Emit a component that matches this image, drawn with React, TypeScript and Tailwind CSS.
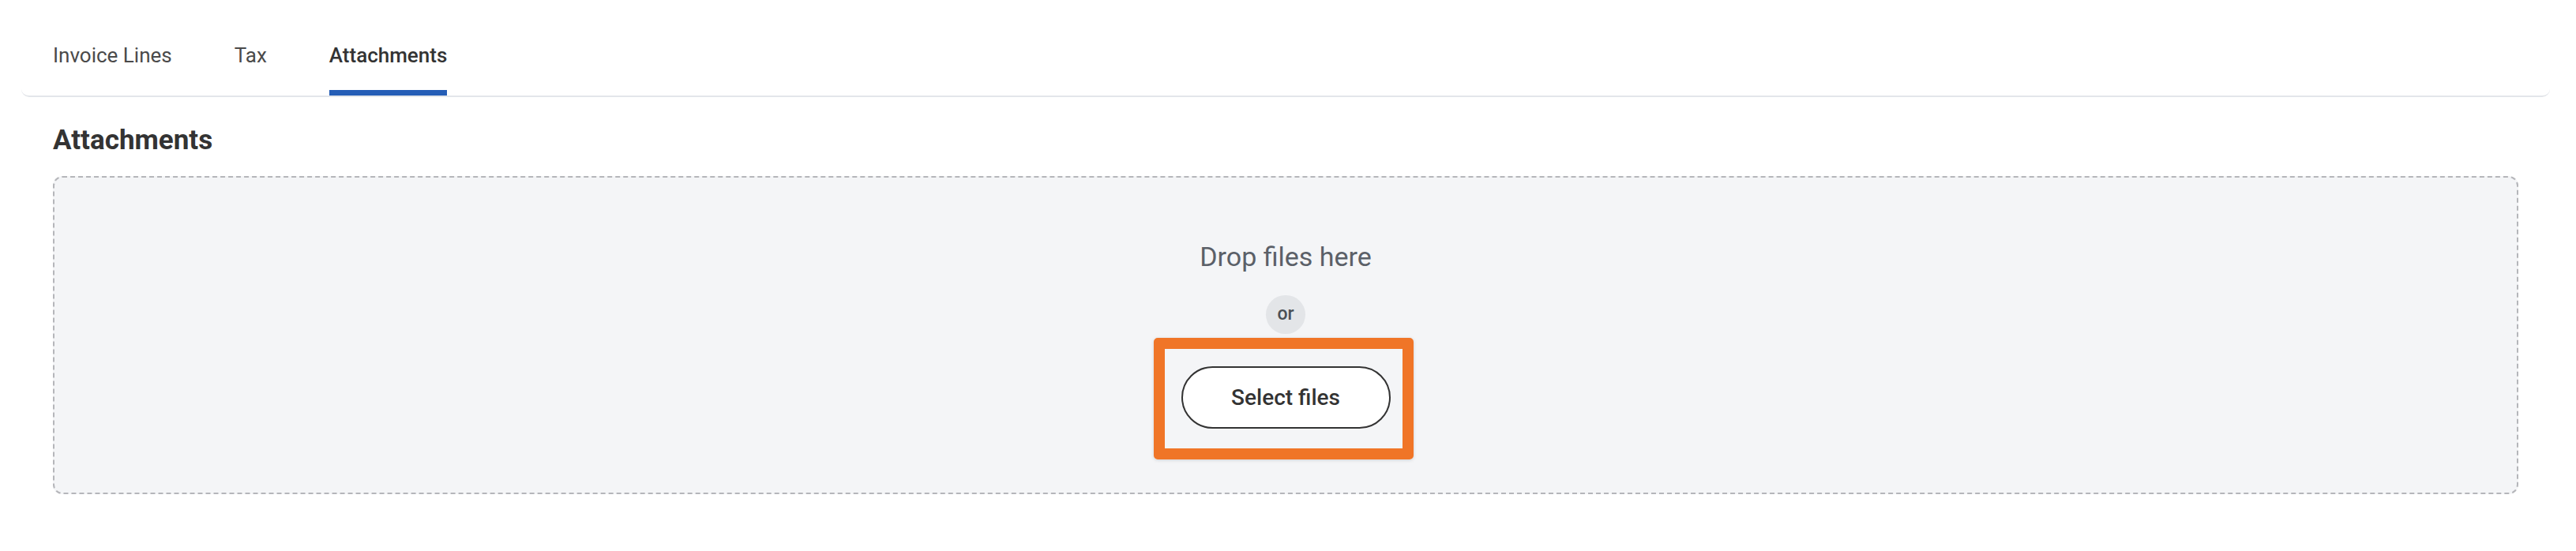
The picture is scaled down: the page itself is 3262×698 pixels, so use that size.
import React from 'react';

const tabs = ['Invoice Lines', 'Tax', 'Attachments'];

const App: React.FC = () => {
  const active = 'Attachments';

  return (
    <div className="min-h-screen bg-white pl-[27px] pr-[33px] font-['Roboto',sans-serif]">
      {/* tab bar */}
      <div className="flex border-b-2 border-[#e3e6ea] rounded-b-[10px] px-[40px]">
        {tabs.map((tab, i) => (
          <button
            key={tab}
            className={`pt-[52px] pb-[26px] border-b-[7px] text-[26px] leading-[36px] ${
              i > 0 ? 'ml-[79px]' : ''
            } ${
              tab === active
                ? 'border-[#255eb6] text-[#333333] font-medium'
                : 'border-transparent text-[#4a4a4a] font-normal'
            }`}
          >
            {tab}
          </button>
        ))}
      </div>

      <div className="px-[40px]">
        <h2 className="mt-[33px] text-[35px] leading-[44px] font-bold text-[#333333]">
          Attachments
        </h2>

        {/* drop zone */}
        <div className="mt-[23px] flex flex-col items-center rounded-[12px] border-2 border-dashed border-[#b5b6ba] bg-[#f4f5f7] pt-[80px] pb-[81px]">
          <p className="text-[34px] leading-[40px] text-[#5b6068]">Drop files here</p>
          <div className="mt-[29px] flex h-[49px] w-[50px] items-center justify-center rounded-full bg-[#e3e5e8] text-[23px] font-medium text-[#4b5056]">
            or
          </div>
          <div className="relative mt-[41px]">
            <button className="flex h-[79px] w-[265px] items-center justify-center rounded-full border-2 border-[#333333] bg-white text-[28px] font-medium text-[#333333]">
              Select files
            </button>
            {/* annotation highlight */}
            <div className="pointer-events-none absolute -top-[36px] -left-[35px] -right-[29px] -bottom-[39px] rounded-[5px] border-[14px] border-[#f07527] shadow-[0_1px_4px_rgba(0,0,0,0.15)]" />
          </div>
        </div>
      </div>
    </div>
  );
};

export default App;
